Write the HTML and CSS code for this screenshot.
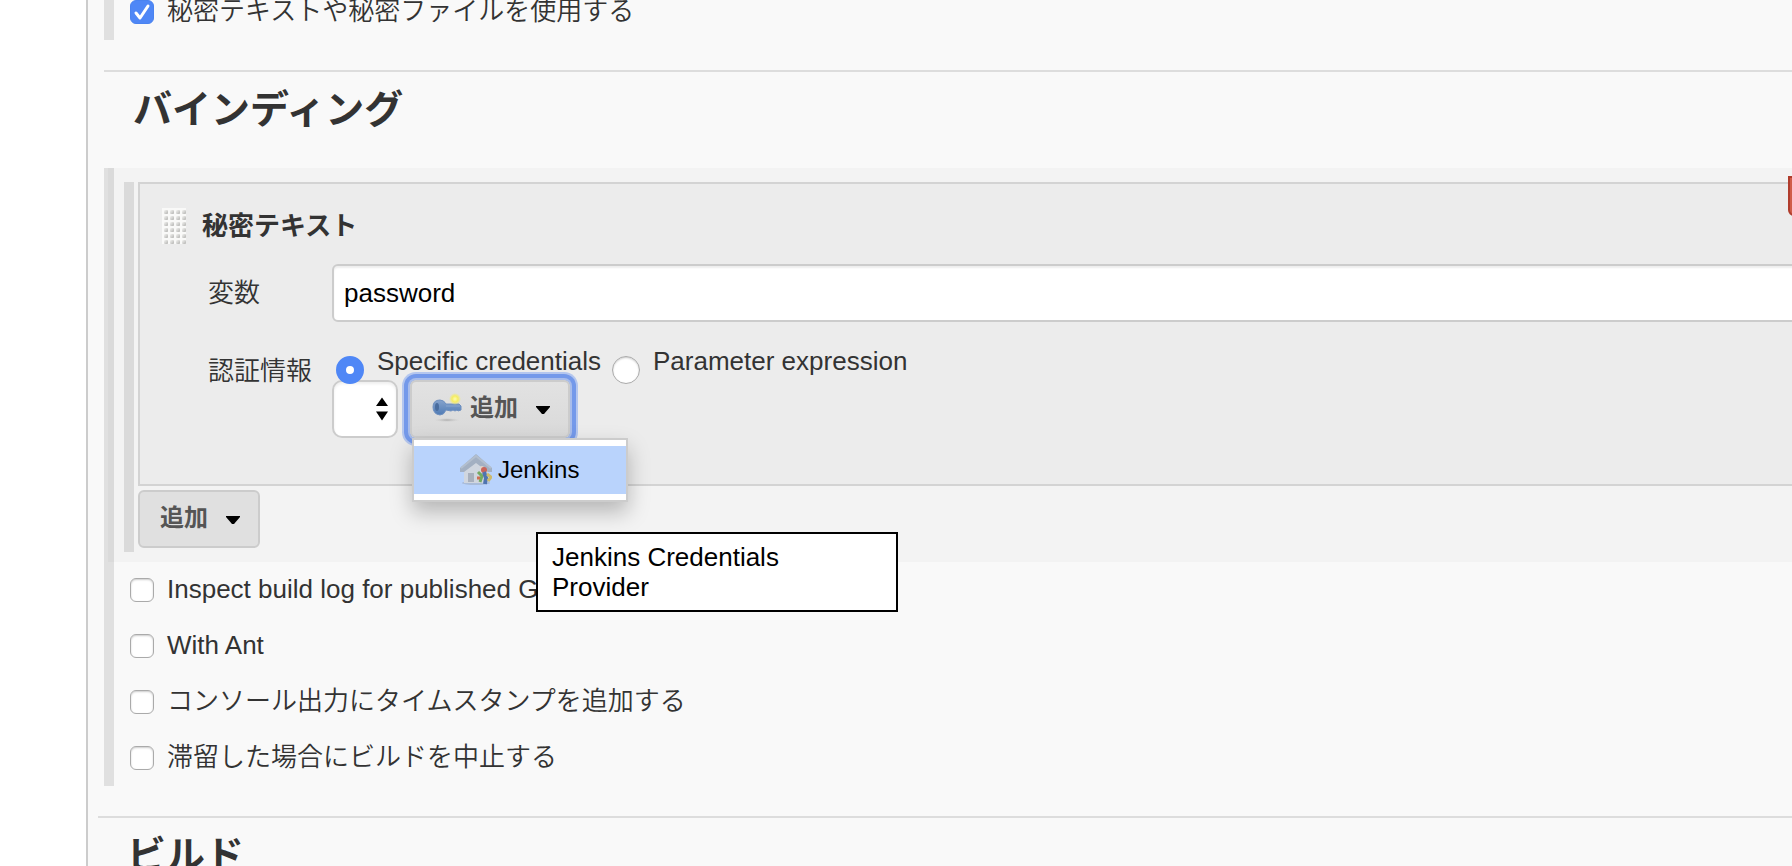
FILE: index.html
```html
<!DOCTYPE html>
<html lang="ja">
<head>
<meta charset="utf-8">
<title>バインディング</title>
<link rel="stylesheet" href="styles.css">
</head>
<body>
<main class="config">
  <section class="options">
    <label class="option"><input type="checkbox" class="check" checked>秘密テキストや秘密ファイルを使用する</label>
  </section>

  <hr class="divider">
  <h2 class="heading">バインディング</h2>

  <section class="options">
    <div class="nested">
      <div class="repeat">
        <div class="chunk">
          <button type="button" class="delete" aria-label="削除"></button>
          <div class="chunk-head">
            <svg class="grip" width="24" height="36" viewBox="0 0 24 36" aria-hidden="true">
              <defs>
                <linearGradient id="dot" x1="0" y1="0" x2="1" y2="1"><stop offset="0.1" stop-color="#efefed"/><stop offset="1" stop-color="#b2b2b0"/></linearGradient>
                <pattern id="dots" width="6" height="6" patternUnits="userSpaceOnUse"><rect width="6" height="6" fill="#f9f9f8"/><rect x="2" y="2" width="4" height="4" rx="1" fill="url(#dot)"/></pattern>
              </defs>
              <rect width="24" height="36" fill="url(#dots)"/>
            </svg>
            <b class="chunk-title">秘密テキスト</b>
          </div>
          <div class="field">
            <label for="variable">変数</label>
            <input id="variable" class="text" type="text" value="password">
          </div>
          <div class="field credentials">
            <span class="credentials-label" id="cred">認証情報</span>
            <div class="credentials-body" role="group" aria-labelledby="cred">
              <div class="radios">
                <label class="radio-label"><input class="radio" type="radio" name="kind" checked>Specific credentials</label>
                <label class="radio-label"><input class="radio" type="radio" name="kind">Parameter expression</label>
              </div>
              <div class="picker">
                <div class="select-box">
                  <select class="select" aria-labelledby="cred"><option></option></select>
                  <svg class="select-arrows" width="12" height="24" viewBox="0 0 12 24" aria-hidden="true"><path d="M6 0.500 12 9H0zM0 14.500H12L6 23.500z"/></svg>
                </div>
                <div class="add-box">
                  <button type="button" class="button button-focus">
                    <svg class="key" width="30" height="30" viewBox="0 0 30 30" aria-hidden="true">
                      <defs>
                        <linearGradient id="steel" x1="0" y1="0" x2="0" y2="1"><stop offset="0" stop-color="#86a3cc"/><stop offset="1" stop-color="#4f7bb5"/></linearGradient>
                        <radialGradient id="glow"><stop offset="0" stop-color="#fffbb0"/><stop offset="0.500" stop-color="#f5ed62"/><stop offset="1" stop-color="#f5ed62" stop-opacity="0"/></radialGradient>
                        <radialGradient id="shade"><stop offset="0" stop-color="#aaa"/><stop offset="1" stop-color="#ccc" stop-opacity="0"/></radialGradient>
                      </defs>
                      <ellipse cx="15" cy="27" rx="13" ry="2" fill="url(#shade)"/>
                      <path d="M1 14Q1 7 8 7Q12 7 14 11H27L29 13V17L26 18L25 17L23 18L21 17L19 18L14 17Q12 22 8 22Q1 21 1 14Z" fill="url(#steel)" stroke="#6f90c0"/>
                      <ellipse cx="5" cy="14" rx="2" ry="4" fill="#4a6d9e"/>
                      <path d="M14 13H28" stroke="#86a5ce"/>
                      <circle cx="23" cy="6" r="6" fill="url(#glow)"/>
                    </svg>
                    追加
                    <svg class="caret" width="14" height="8" viewBox="0 0 14 8" aria-hidden="true"><path d="M0 0H14V1L8 8H6L0 1z"/></svg>
                  </button>
                  <div class="menu" role="menu">
                    <button type="button" class="menu-item" role="menuitem">
                      <svg width="32" height="32" viewBox="0 0 32 32" aria-hidden="true">
                        <ellipse cx="16" cy="29" rx="14" ry="2" fill="#a9bcd9"/>
                        <path d="M4 14L16 4L28 14V29H4Z" fill="#d0d6df"/>
                        <path d="M0 14L16 0L32 14V18H28L16 9L4 18H0Z" fill="#a3b0c2"/>
                        <path d="M1 14L16 2L31 14" fill="none" stroke="#b3bfce" stroke-width="2"/>
                        <rect x="8" y="19" width="6" height="9" fill="#a8b0bd"/>
                        <circle cx="22" cy="14" r="2" fill="#e6d3c4"/>
                        <circle cx="24" cy="16" r="3" fill="#c9655a"/>
                        <path d="M18 18L22 22L20 28" fill="none" stroke="#74aa62" stroke-width="3"/>
                        <path d="M24 18L26 24L25 30" fill="none" stroke="#4e74b0" stroke-width="4"/>
                        <path d="M27 20L31 23L28 27" fill="none" stroke="#ccba6c" stroke-width="3"/>
                        <path d="M17 24H20" stroke="#cf6f50" stroke-width="3"/>
                      </svg>
                      Jenkins
                    </button>
                  </div>
                  <div class="tooltip" role="tooltip">Jenkins Credentials Provider</div>
                </div>
              </div>
            </div>
          </div>
        </div>
        <button type="button" class="button">追加
          <svg class="caret" width="14" height="8" viewBox="0 0 14 8" aria-hidden="true"><path d="M0 0H14V1L8 8H6L0 1z"/></svg>
        </button>
      </div>
    </div>
    <label class="option"><input type="checkbox" class="check">Inspect build log for published Gradle build scans</label>
    <label class="option"><input type="checkbox" class="check">With Ant</label>
    <label class="option"><input type="checkbox" class="check">コンソール出力にタイムスタンプを追加する</label>
    <label class="option"><input type="checkbox" class="check">滞留した場合にビルドを中止する</label>
  </section>

  <div class="next-section">
    <hr class="divider">
    <h2 class="heading">ビルド</h2>
  </div>
</main>
</body>
</html>
```
FILE: styles.css
```css
* { box-sizing: border-box; }

body {
  height: 100vh;
  margin: 0;
  overflow: hidden;
  background: #fff;
  color: #333;
  font: 350 26px/30px "Liberation Sans", "Noto Sans CJK JP", sans-serif;
}

button, input, select { margin: 0; font: inherit; }

.config {
  margin: -16px 0 0 86px;
  padding-left: 16px;
  border-left: 2px solid #ccc;
  background: #f9f9f9;
}

.options { border-left: 10px solid #e0e0e0; }

.option {
  display: flex;
  align-items: center;
  gap: 13px;
  height: 56px;
  padding: 0 0 2px 16px;
  white-space: nowrap;
}

.check {
  appearance: none;
  flex: none;
  width: 24px;
  height: 24px;
  margin-top: 2px;
  border: 1px solid #aaa;
  border-radius: 6px;
  background: #fff;
  box-shadow: inset 0 1px 2px #ccc;
}

.check:checked {
  border-color: #4a83f0;
  background: #4f87f6 url("data:image/svg+xml,%3Csvg xmlns='http://www.w3.org/2000/svg' viewBox='0 0 22 22'%3E%3Cpath d='M5 12l4 5 8-12' fill='none' stroke='white' stroke-width='3' stroke-linecap='round' stroke-linejoin='round'/%3E%3C/svg%3E");
  box-shadow: none;
}

.divider {
  margin: 30px 0 0;
  border: 0;
  border-top: 2px solid #ddd;
}

.next-section { margin-left: -6px; }

.heading {
  height: 96px;
  margin: 0;
  padding: 10px 0 0 29px;
  font-size: 39px;
  line-height: 56px;
}

.nested {
  margin-left: -6px;
  padding: 14px 0 10px 16px;
  background: rgba(0, 0, 0, 0.024);
}

.repeat {
  padding: 0 0 4px 4px;
  border-left: 10px solid #dadada;
}

.chunk {
  position: relative;
  margin: 0 -20px 4px 0;
  padding: 24px 0 46px 22px;
  border: 2px solid #d3d3d3;
  background: #ececec;
}

.delete {
  position: absolute;
  top: -8px;
  right: -18px;
  width: 40px;
  height: 40px;
  border: 2px solid #b03c2c;
  border-radius: 0 0 6px 6px;
  background: #d05c48;
}

.chunk-head {
  display: flex;
  align-items: center;
  gap: 16px;
  height: 36px;
  margin-bottom: 20px;
}

.chunk-title { font-weight: 700; }

.field {
  display: grid;
  grid-template-columns: 124px 1fr;
  align-items: center;
  padding-left: 46px;
}

.text {
  width: 100%;
  height: 58px;
  padding: 0 10px;
  border: 2px solid #ccc;
  border-radius: 6px;
  background: #fff;
  box-shadow: inset 0 2px 2px #eee;
  color: #000;
}

.credentials {
  align-items: start;
  margin-top: 22px;
}

.credentials-label { padding-top: 12px; }

.radios {
  display: flex;
  gap: 11px;
  height: 36px;
}

.radio-label {
  display: flex;
  gap: 13px;
  line-height: 34px;
}

.radio-label:first-child { padding-left: 4px; }

.radio {
  appearance: none;
  flex: none;
  width: 28px;
  height: 28px;
  margin-top: 12px;
  border: 1px solid #aaa;
  border-radius: 50%;
  background: #fff;
  box-shadow: inset 0 1px 2px #ccc;
}

.radio:checked {
  position: relative;
  z-index: 1;
  border: 10px solid #4f87f6;
  box-shadow: none;
}

.picker {
  display: flex;
  gap: 12px;
}

.select-box, .add-box { position: relative; }

.select {
  appearance: none;
  display: block;
  width: 66px;
  height: 58px;
  border: 2px solid #ccc;
  border-radius: 10px;
  background: #fff;
  box-shadow: inset 0 2px 3px #eee;
}

.select-arrows {
  position: absolute;
  top: 17px;
  right: 10px;
  pointer-events: none;
}

.button {
  display: flex;
  align-items: center;
  height: 58px;
  padding: 0 18px 2px 20px;
  border: 2px solid #ccc;
  border-radius: 6px;
  background: #e0e0e0;
  color: #555;
  font-size: 24px;
  font-weight: 700;
}

.caret {
  margin: 4px 0 0 18px;
  fill: #000;
}

.button-focus {
  background: linear-gradient(#e2e2e2, #d9d9d9);
  box-shadow: 0 0 0 2px #a9bdea, 0 0 0 6px #7499ea, 0 0 0 8px #b4c6ee;
}

.key { margin-right: 8px; }

.menu {
  position: absolute;
  top: 58px;
  left: 2px;
  z-index: 2;
  width: 216px;
  padding: 6px 0;
  border: 2px solid #ccc;
  background: #fff;
  box-shadow: 0 10px 20px rgba(0, 0, 0, 0.25);
}

.menu-item {
  display: flex;
  align-items: center;
  gap: 6px;
  width: 100%;
  height: 48px;
  padding: 0 0 0 46px;
  border: 0;
  background: #b9d3fc;
  color: #000;
  font-size: 24px;
}

.tooltip {
  position: absolute;
  top: 152px;
  left: 126px;
  z-index: 3;
  width: 362px;
  padding: 8px 40px 8px 14px;
  border: 2px solid #000;
  background: #fff;
  color: #000;
}
```
